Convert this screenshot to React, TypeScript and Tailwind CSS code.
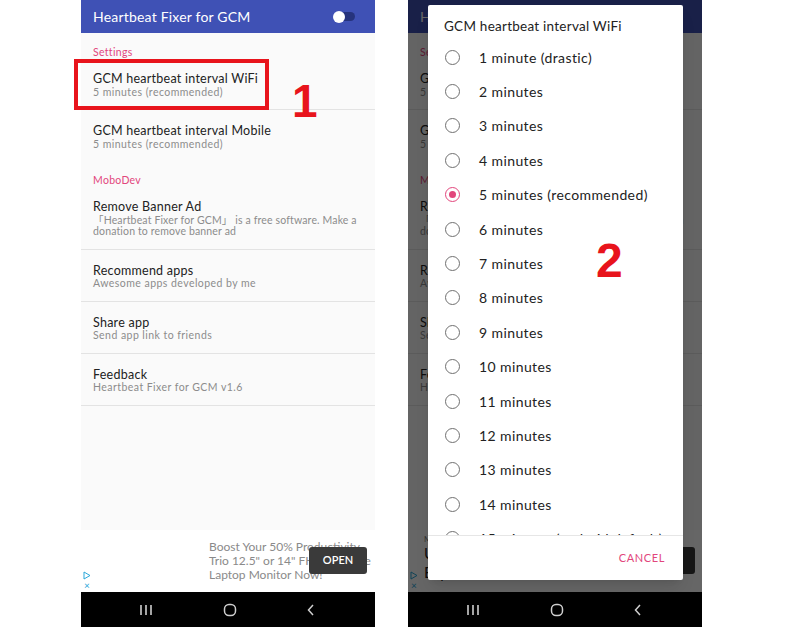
import type { ReactNode } from 'react'

const font = "font-['Lato','Noto_Sans_CJK_SC',sans-serif]"

function Header({ label }: { label: string }) {
  return (
    <div className="pl-3 pt-[13px] h-[25px] text-[10.5px] leading-[12px] tracking-[0.3px] text-[#e2467c]">{label}</div>
  )
}

function Item({ title, sub, divider, tight }: { title: string; sub: ReactNode; divider?: boolean; tight?: boolean }) {
  return (
    <div className={`pl-3 pt-[13px] pb-[11px] ${divider ? 'border-b border-[#e3e3e3]' : ''}`}>
      <div className="text-[12.5px] leading-[15px] tracking-[0.25px] text-[#222]">{title}</div>
      <div className={`text-[10.5px] leading-[11.5px] ${tight ? 'tracking-[0.15px]' : 'tracking-[0.45px]'} text-[#8c8c8c] mt-[0.5px] whitespace-nowrap`}>{sub}</div>
    </div>
  )
}

function NavBar() {
  return (
    <div className="h-[35px] bg-black flex items-center justify-between pl-[58px] pr-[59px]">
      <svg width="14" height="12" viewBox="0 0 14 12">
        <g stroke="#cfcfcf" strokeWidth="1.6">
          <line x1="2" y1="1" x2="2" y2="11" />
          <line x1="7" y1="1" x2="7" y2="11" />
          <line x1="12" y1="1" x2="12" y2="11" />
        </g>
      </svg>
      <svg width="14" height="14" viewBox="0 0 14 14">
        <rect x="1.5" y="1.5" width="11" height="11" rx="4.5" fill="none" stroke="#cfcfcf" strokeWidth="1.5" />
      </svg>
      <svg width="10" height="14" viewBox="0 0 10 14">
        <polyline points="7,2 2.5,7 7,12" fill="none" stroke="#cfcfcf" strokeWidth="1.5" />
      </svg>
    </div>
  )
}

function AdChoices() {
  return (
    <div className="absolute left-[2px] bottom-[2px] flex flex-col items-center text-[#2aa7d9] leading-none">
      <svg width="8" height="9" viewBox="0 0 8 9">
        <polygon points="1,1 7,4.5 1,8" fill="none" stroke="#2aa7d9" strokeWidth="1" />
      </svg>
      <span className="text-[10px] leading-[10px]">×</span>
    </div>
  )
}

function Screen() {
  return (
    <div className="flex-1 bg-[#fafafa]">
      <Header label="Settings" />
      <Item title="GCM heartbeat interval WiFi" sub="5 minutes (recommended)" divider />
      <Item title="GCM heartbeat interval Mobile" sub="5 minutes (recommended)" />
      <Header label="MoboDev" />
      <Item
        title="Remove Banner Ad"
        sub={<>「Heartbeat Fixer for GCM」 is a free software. Make a<br />donation to remove banner ad</>}
        divider
        tight
      />
      <Item title="Recommend apps" sub="Awesome apps developed by me" divider />
      <Item title="Share app" sub="Send app link to friends" divider />
      <Item title="Feedback" sub="Heartbeat Fixer for GCM v1.6" divider />
    </div>
  )
}

function AppBar() {
  return (
    <div className="h-[33px] bg-[#3f51b5] flex items-center justify-between pl-3 pr-5">
      <span className="text-white text-[14px] tracking-[0.2px]">Heartbeat Fixer for GCM</span>
      <div className="relative w-[22px] h-[12px] flex items-center">
        <div className="ml-[3px] w-[19px] h-[9px] rounded-full bg-[#26337d]" />
        <div className="absolute left-0 top-0 w-[12px] h-[12px] rounded-full bg-white" />
      </div>
    </div>
  )
}

function LeftAd() {
  return (
    <div className="relative h-[62px] bg-white overflow-hidden">
      <div className="pl-[128px] pt-[10px] text-[12px] leading-[14px] text-[#8a8a8a] whitespace-nowrap">
        <div>Boost Your 50% Productivity</div>
        <div>Trio 12.5" or 14" FHD Portable</div>
        <div>Laptop Monitor Now!</div>
      </div>
      <div className="absolute right-[8px] top-[17px] w-[58px] h-[27px] rounded-[3px] bg-[#3a3a3a] flex items-center justify-center text-white text-[11px] font-semibold">OPEN</div>
      <AdChoices />
    </div>
  )
}

function RightAd() {
  return (
    <div className="relative h-[62px] bg-white overflow-hidden">
      <div className="pl-[16px] pt-[4px] whitespace-nowrap">
        <div className="text-[8px] leading-[10px] text-[#777]">Microsoft</div>
        <div className="text-[15px] leading-[19px] text-[#222]">Upgrade your laptop</div>
        <div className="text-[15px] leading-[19px] text-[#222]">Explore more</div>
      </div>
      <div className="absolute right-[7px] top-[17px] w-[60px] h-[27px] rounded-[3px] bg-[#3a3a3a]" />
      <AdChoices />
    </div>
  )
}

const options = [
  '1 minute (drastic)', '2 minutes', '3 minutes', '4 minutes', '5 minutes (recommended)',
  '6 minutes', '7 minutes', '8 minutes', '9 minutes', '10 minutes', '11 minutes',
  '12 minutes', '13 minutes', '14 minutes', '15 minutes (android default)',
]

function Dialog() {
  return (
    <div className="absolute left-[20px] top-[5px] w-[255px] h-[575px] bg-white rounded-[2px] shadow-lg flex flex-col">
      <div className="pl-4 pt-[13px] h-[35px] text-[13.5px] leading-[16px] tracking-[0.25px] text-[#222]">GCM heartbeat interval WiFi</div>
      <div className="flex-1 overflow-hidden border-b border-[#e6e6e6]">
        {options.map((o, i) => (
          <div key={o} className="h-[34.4px] flex items-center">
            {i === 4 ? (
              <div className="ml-[17px] w-[15px] h-[15px] rounded-full border-[1.5px] border-[#e2467c] flex items-center justify-center">
                <div className="w-[7px] h-[7px] rounded-full bg-[#e2467c]" />
              </div>
            ) : (
              <div className="ml-[17px] w-[15px] h-[15px] rounded-full border-[1.5px] border-[#707070]" />
            )}
            <span className="ml-[19px] text-[14px] tracking-[0.4px] text-[#222] whitespace-nowrap">{o}</span>
          </div>
        ))}
      </div>
      <div className="h-[44px] flex items-center justify-end pr-[18px]">
        <span className="text-[11px] tracking-[0.6px] text-[#e2467c]">CANCEL</span>
      </div>
    </div>
  )
}

function Phone({ dialog }: { dialog?: boolean }) {
  return (
    <div className="w-[294px] h-[627px] flex flex-col">
      <div className="relative flex-1 flex flex-col overflow-hidden">
        <AppBar />
        <Screen />
        {dialog ? <RightAd /> : <LeftAd />}
        {dialog && <div className="absolute inset-0 bg-black/60" />}
        {dialog && <Dialog />}
      </div>
      <NavBar />
    </div>
  )
}

export default function App() {
  return (
    <div className={`relative w-[800px] h-[629px] bg-white overflow-hidden flex gap-[33px] pl-[81px] ${font}`}>
      <Phone />
      <Phone dialog />

      {/* annotations */}
      <div className="absolute left-[74px] top-[59px] w-[195px] h-[51px] border-4 border-[#e8141c]" />
      <div className="absolute left-[292px] top-[76px] text-[46px] leading-[50px] font-bold text-[#e8141c] font-['Liberation_Sans',sans-serif]">1</div>
      <div className="absolute left-[596px] top-[235px] text-[48px] leading-[52px] font-bold text-[#e8141c] font-['Liberation_Sans',sans-serif]">2</div>
    </div>
  )
}
